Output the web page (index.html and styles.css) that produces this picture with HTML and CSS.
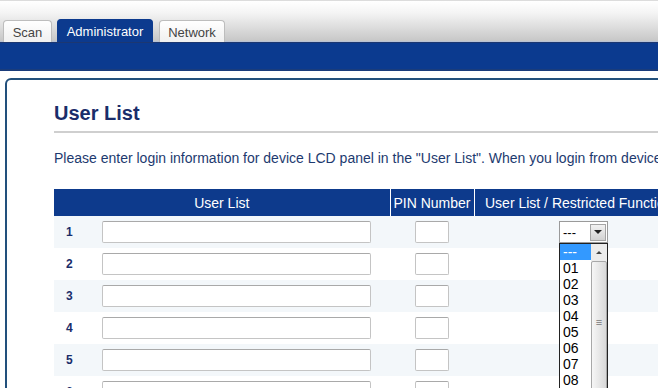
FILE: index.html
```html
<!DOCTYPE html>
<html lang="en">
<head>
  <meta charset="UTF-8">
  <title>User List</title>
  <link rel="stylesheet" href="styles.css">
</head>
<body>
  <div class="topbar">
    <div class="tabs">
      <div class="tab tab-cut">Print</div>
      <div class="tab tab-scan">Scan</div>
      <div class="tab tab-admin active">Administrator</div>
      <div class="tab tab-net">Network</div>
    </div>
  </div>
  <div class="bluebar"></div>

  <div class="page">
    <div class="panel">
      <h1>User List</h1>
      <p class="intro">Please enter login information for device LCD panel in the "User List". When you login from device LCD panel, the restricted functions will be applied.</p>

      <table class="users">
        <colgroup>
          <col class="c-num">
          <col class="c-name">
          <col class="c-pin">
          <col class="c-func">
        </colgroup>
        <tr>
          <th colspan="2">User List</th>
          <th class="sep">PIN Number</th>
          <th class="sep">User List / Restricted Functions</th>
        </tr>
        <tr>
          <td class="num">1</td>
          <td><input type="text" class="name"></td>
          <td class="center"><input type="text" class="pin"></td>
          <td class="center">
            <div class="combo">
              <div class="combo-box"><span>---</span><span class="combo-btn"><i></i></span></div>
              <div class="combo-list">
                <div class="items">
                  <div class="item selected">---</div>
                  <div class="item">01</div>
                  <div class="item">02</div>
                  <div class="item">03</div>
                  <div class="item">04</div>
                  <div class="item">05</div>
                  <div class="item">06</div>
                  <div class="item">07</div>
                  <div class="item">08</div>
                  <div class="item">09</div>
                </div>
                <div class="scroll">
                  <div class="scroll-up"><i></i></div>
                  <div class="thumb"><span>&#8801;</span></div>
                </div>
              </div>
            </div>
          </td>
        </tr>
        <tr>
          <td class="num">2</td>
          <td><input type="text" class="name"></td>
          <td class="center"><input type="text" class="pin"></td>
          <td></td>
        </tr>
        <tr>
          <td class="num">3</td>
          <td><input type="text" class="name"></td>
          <td class="center"><input type="text" class="pin"></td>
          <td></td>
        </tr>
        <tr>
          <td class="num">4</td>
          <td><input type="text" class="name"></td>
          <td class="center"><input type="text" class="pin"></td>
          <td></td>
        </tr>
        <tr>
          <td class="num">5</td>
          <td><input type="text" class="name"></td>
          <td class="center"><input type="text" class="pin"></td>
          <td></td>
        </tr>
        <tr>
          <td class="num">6</td>
          <td><input type="text" class="name"></td>
          <td class="center"><input type="text" class="pin"></td>
          <td></td>
        </tr>
      </table>
    </div>
  </div>
</body>
</html>
```

FILE: styles.css
```css
* {
  box-sizing: border-box;
}

body {
  margin: 0;
  overflow: hidden;
  font-family: "Liberation Sans", Arial, sans-serif;
  font-size: 13px;
  background: #fff;
  color: #333;
}

/* header with tabs */
.topbar {
  height: 42px;
  border-top: 1px solid #dcdcdc;
  border-bottom: 1px solid #b8c2d6;
  background: linear-gradient(to bottom, #ffffff 0%, #f4f4f4 30%, #c7c7c7 100%);
  display: flex;
  align-items: flex-end;
}

.tabs {
  display: flex;
  align-items: flex-end;
  gap: 5px;
  margin-left: -60px;
  margin-bottom: -1px;
}

.tab {
  height: 22px;
  line-height: 23px;
  text-align: center;
  background: linear-gradient(to bottom, #ffffff, #f0f0f0);
  border: 1px solid #bdbdbd;
  border-bottom: none;
  border-radius: 4px 4px 0 0;
  color: #444;
  font-size: 13px;
}

.tab-cut {
  width: 58px;
}

.tab-scan {
  width: 49px;
}

.tab-admin {
  width: 96px;
}

.tab-net {
  width: 66px;
  margin-left: 1px;
}

.tab.active {
  height: 23px;
  line-height: 24px;
  background: #0c3a8e;
  border-color: #0c3a8e;
  color: #fff;
}

.bluebar {
  height: 29px;
  background: #0b3a8f;
  border-top: 1px solid #1c3771;
  border-bottom: 2px solid #1a3c7b;
}

/* content panel */
.page {
  padding: 7px 0 0 5px;
}

.panel {
  width: 780px;
  height: 420px;
  border: 2px solid #22507c;
  border-radius: 6px;
  padding: 22px 0 0 47px;
}

h1 {
  margin: 0;
  font-size: 20px;
  line-height: 23px;
  font-weight: bold;
  color: #1a2d6a;
  padding-bottom: 6px;
  border-bottom: 2px solid #cfcfcf;
}

.intro {
  margin: 17px 0 0;
  font-size: 14px;
  line-height: 16px;
  white-space: nowrap;
  color: #1d3a6f;
}

/* user table */
.users {
  margin-top: 23px;
  border-collapse: collapse;
  table-layout: fixed;
  width: 636px;
}

.c-num {
  width: 44px;
}

.c-name {
  width: 292px;
}

.c-pin {
  width: 84px;
}

.c-func {
  width: 216px;
}

.users th {
  height: 27px;
  padding: 0;
  background: #0d3a8c;
  color: #fff;
  font-weight: normal;
  font-size: 14px;
  white-space: nowrap;
  overflow: hidden;
}

.users th.sep {
  border-left: 1px solid #fff;
}

.users td {
  height: 32px;
  padding: 0;
}

.users tr:nth-child(even) td {
  background: #f3f7fa;
}

.users td.num {
  padding-left: 12px;
  font-weight: bold;
  font-size: 12px;
  color: #1a2d6a;
}

.users td.center {
  text-align: center;
}

input.name,
input.pin {
  height: 22px;
  margin: 0;
  border: 1px solid #c4c4c4;
  border-top-color: #a9a9a9;
  border-radius: 2px;
  background: #fff;
  vertical-align: middle;
}

input.name {
  width: 269px;
  margin-left: 4px;
}

input.pin {
  width: 34px;
}

/* the open combo box */
.combo {
  position: relative;
  display: inline-block;
  width: 49px;
  margin-left: 3px;
  text-align: left;
  vertical-align: middle;
}

.combo-box {
  height: 22px;
  border: 1px solid #9a9a9a;
  background: #fff;
  display: flex;
  align-items: center;
  justify-content: space-between;
  padding: 2px 1px 2px 3px;
  color: #000;
  font-size: 13px;
}

.combo-btn {
  width: 16px;
  height: 17px;
  background: linear-gradient(to bottom, #f2f2f2, #d2d2d2);
  border: 1px solid #a5a5a5;
  display: flex;
  align-items: center;
  justify-content: center;
}

.combo-btn i,
.scroll-up i {
  width: 0;
  height: 0;
  border-left: 4px solid transparent;
  border-right: 4px solid transparent;
  border-top: 4px solid #222;
}

.combo-list {
  position: absolute;
  left: 0;
  top: 22px;
  width: 49px;
  height: 190px;
  border: 1px solid #222;
  background: #fff;
  display: flex;
}

.items {
  flex: 1;
}

.item {
  height: 16px;
  line-height: 16px;
  padding-left: 3px;
  font-size: 14px;
  color: #000;
}

.item.selected {
  background: #3399ff;
  color: #fff;
}

.scroll {
  width: 16px;
  background: #ececec;
  display: flex;
  flex-direction: column;
}

.scroll-up {
  height: 17px;
  display: flex;
  align-items: center;
  justify-content: center;
}

.scroll-up i {
  border-top: none;
  border-left-width: 3px;
  border-right-width: 3px;
  border-bottom: 3px solid #444;
}

.thumb {
  flex: 1;
  border: 1px solid #a8a8a8;
  border-radius: 2px;
  background: linear-gradient(to right, #f6f6f6, #d9d9d9);
  text-align: center;
  padding-top: 54px;
  font-size: 11px;
  color: #777;
}
```
